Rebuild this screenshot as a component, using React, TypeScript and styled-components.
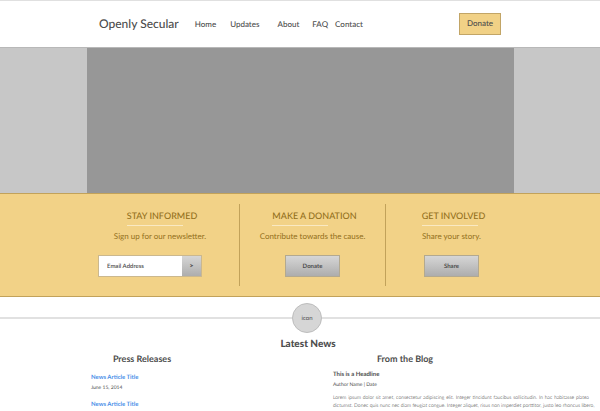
import React from "react";
import styled, { createGlobalStyle } from "styled-components";

const GlobalStyle = createGlobalStyle`
  *, *::before, *::after { box-sizing: border-box; }
  body {
    margin: 0;
    background: #fff;
    color: #4d4d4d;
    font-family: Lato, "Open Sans", sans-serif;
    text-rendering: geometricPrecision;
  }
  h1, h2, h3, p { margin: 0; }
  button, input { font-family: inherit; color: inherit; margin: 0; text-rendering: inherit; }
`;

const Page = styled.div`
  overflow: hidden;
  height: 100vh;
`;

const Header = styled.header`
  display: flex;
  align-items: center;
  height: 47px;
  padding: 0 99px;
  border-top: 1px solid #e0e0e0;
`;

const Brand = styled.a`
  margin-right: 16px;
  color: #4d4d4d;
  font-size: 12px;
  font-weight: 500;
  line-height: 20px;
  text-decoration: none;
  white-space: nowrap;
`;

const Nav = styled.nav`
  display: flex;
  flex: 1;
`;

const NavLink = styled.a<{ $gap: number }>`
  margin-right: ${(p) => p.$gap}px;
  color: #4d4d4d;
  font-size: 8px;
  font-weight: 500;
  line-height: 12px;
  text-decoration: none;
`;

const HeaderDonate = styled.button`
  width: 42px;
  height: 22px;
  padding: 0 0 2px;
  border: 1px solid #c2a566;
  background: #f1d186;
  font-size: 8px;
  font-weight: 500;
`;

const Hero = styled.section`
  display: grid;
  grid-template-columns: 87fr 427fr 86fr;
  height: 146px;
  border-top: 1px solid #b8b8b8;
  background: #c7c7c7;
`;

const HeroImage = styled.div`
  grid-column: 2;
  background: #979797;
`;

const Actions = styled.section`
  display: grid;
  grid-template-columns: 81fr 159fr 146fr 131fr 83fr;
  height: 104px;
  padding: 10px 0;
  border-top: 1px solid #c2a25a;
  border-bottom: 1px solid #c2a25a;
  background: #f2d287;
`;

const Action = styled.article<{ $first?: boolean; $divided?: boolean }>`
  grid-column: ${(p) => (p.$first ? 2 : "auto")};
  display: flex;
  flex-direction: column;
  align-items: center;
  border-right: ${(p) => (p.$divided ? "1px solid #c2a25a" : "none")};
  color: #93701c;
`;

const ActionHead = styled.div`
  padding: 5px 0 0 4px;
`;

const ActionTitle = styled.h2`
  font-size: 9px;
  font-weight: 500;
  line-height: 14px;
`;

const Rule = styled.div`
  width: 56px;
  height: 1px;
  margin-top: 2px;
  background: #f9e9c3;
`;

const ActionText = styled.p`
  margin: 3px 0 12px;
  font-size: 8px;
  line-height: 14px;
  white-space: nowrap;
`;

const grey = "linear-gradient(#d6d6d6, #adadad)";

const ActionButton = styled.button`
  width: 55px;
  height: 22px;
  padding: 0;
  border: 1px solid #b3a98f;
  background: ${grey};
  color: #4d4d4d;
  font-size: 6px;
  font-weight: 700;
`;

const Signup = styled.form`
  display: flex;
  width: 104px;
  height: 22px;
  margin-right: 20px;
  border: 1px solid #cbb88e;
  color: #4d4d4d;
`;

const EmailInput = styled.input`
  flex: 1;
  min-width: 0;
  padding: 0 8px;
  border: 0;
  border-radius: 0;
  background: #fff;
  font-size: 6px;
  font-weight: 600;
  &::placeholder { color: #4d4d4d; opacity: 1; }
`;

const SignupButton = styled.button`
  width: 19px;
  padding: 0;
  border: 0;
  background: ${grey};
  font-size: 7px;
  font-weight: 800;
`;

const IconDivider = styled.div`
  display: flex;
  align-items: center;
  height: 30px;
  margin-top: 6px;
  &::before, &::after { content: ""; height: 2px; background: #e1e1e1; }
  &::before { flex: 292; }
  &::after { flex: 278; }
`;

const IconDisc = styled.span`
  display: flex;
  align-items: center;
  justify-content: center;
  width: 30px;
  height: 30px;
  border: 1px solid #bdbdbd;
  border-radius: 50%;
  background: #d6d6d6;
  font-size: 6px;
`;

const NewsTitle = styled.h1`
  margin-top: 3px;
  padding-left: 16px;
  font-size: 10px;
  font-weight: 900;
  line-height: 16px;
  text-align: center;
`;

const NewsGrid = styled.section`
  display: grid;
  grid-template-columns: minmax(0, 242fr) minmax(0, 256fr);
  padding: 0 11px 0 91px;
`;

const ColumnTitle = styled.h2<{ $width: number }>`
  width: ${(p) => p.$width}px;
  margin-bottom: 4px;
  font-size: 9px;
  font-weight: 700;
  line-height: 14px;
  text-align: center;
`;

const Release = styled.article`
  margin: 0 0 4px;
  padding-top: 3px;
`;

const ReleaseLink = styled.a`
  display: block;
  color: #4a8fe8;
  font-size: 6px;
  font-weight: 700;
  line-height: 10px;
  text-decoration: none;
`;

const Headline = styled.h3`
  font-size: 6px;
  line-height: 10px;
`;

const Meta = styled.p`
  font-size: 5px;
  line-height: 10px;
`;

const Body = styled.p`
  margin-top: 4px;
  color: #222;
  font-size: 5px;
  font-weight: 300;
  line-height: 8px;
`;

const BodyLine = styled.span`
  display: block;
  text-align-last: justify;
  white-space: nowrap;
`;

const links = [
  { label: "Home", gap: 14 },
  { label: "Updates", gap: 18 },
  { label: "About", gap: 13 },
  { label: "FAQ", gap: 7 },
  { label: "Contact", gap: 0 },
];

const releases = [
  { title: "News Article Title", date: "June 15, 2014" },
  { title: "News Article Title" },
];

const bodyLines = [
  "Lorem ipsum dolor sit amet, consectetur adipiscing elit. Integer tincidunt faucibus sollicitudin. In hac habitasse platea",
  "dictumst. Donec quis nunc nec diam feugiat congue. Integer aliquet, risus non imperdiet porttitor, justo leo rhoncus libero,",
  "vitae ornare nunc justo in tortor. Aliquam libero metus, luctus at eleifend vel, placerat non justo. Mauris eu lacus",
];

export default function App() {
  return (
    <Page>
      <GlobalStyle />
      <Header>
        <Brand href="#">Openly Secular</Brand>
        <Nav>
          {links.map((l) => (
            <NavLink key={l.label} href="#" $gap={l.gap}>{l.label}</NavLink>
          ))}
        </Nav>
        <HeaderDonate>Donate</HeaderDonate>
      </Header>
      <Hero><HeroImage /></Hero>
      <Actions>
        <Action $first $divided>
          <ActionHead><ActionTitle>STAY INFORMED</ActionTitle><Rule /></ActionHead>
          <ActionText>Sign up for our newsletter.</ActionText>
          <Signup>
            <EmailInput type="email" aria-label="Email Address" placeholder="Email Address" />
            <SignupButton type="button">&gt;</SignupButton>
          </Signup>
        </Action>
        <Action $divided>
          <ActionHead><ActionTitle>MAKE A DONATION</ActionTitle><Rule /></ActionHead>
          <ActionText>Contribute towards the cause.</ActionText>
          <ActionButton>Donate</ActionButton>
        </Action>
        <Action>
          <ActionHead><ActionTitle>GET INVOLVED</ActionTitle><Rule /></ActionHead>
          <ActionText>Share your story.</ActionText>
          <ActionButton>Share</ActionButton>
        </Action>
      </Actions>
      <IconDivider><IconDisc>icon</IconDisc></IconDivider>
      <NewsTitle>Latest News</NewsTitle>
      <NewsGrid>
        <div>
          <ColumnTitle $width={102}>Press Releases</ColumnTitle>
          {releases.map((r, i) => (
            <Release key={i}>
              <ReleaseLink href="#">{r.title}</ReleaseLink>
              {r.date && <Meta>{r.date}</Meta>}
            </Release>
          ))}
        </div>
        <div>
          <ColumnTitle $width={144}>From the Blog</ColumnTitle>
          <Headline>This is a Headline</Headline>
          <Meta>Author Name | Date</Meta>
          <Body>
            {bodyLines.map((line) => (
              <BodyLine key={line}>{line}</BodyLine>
            ))}
          </Body>
        </div>
      </NewsGrid>
    </Page>
  );
}
